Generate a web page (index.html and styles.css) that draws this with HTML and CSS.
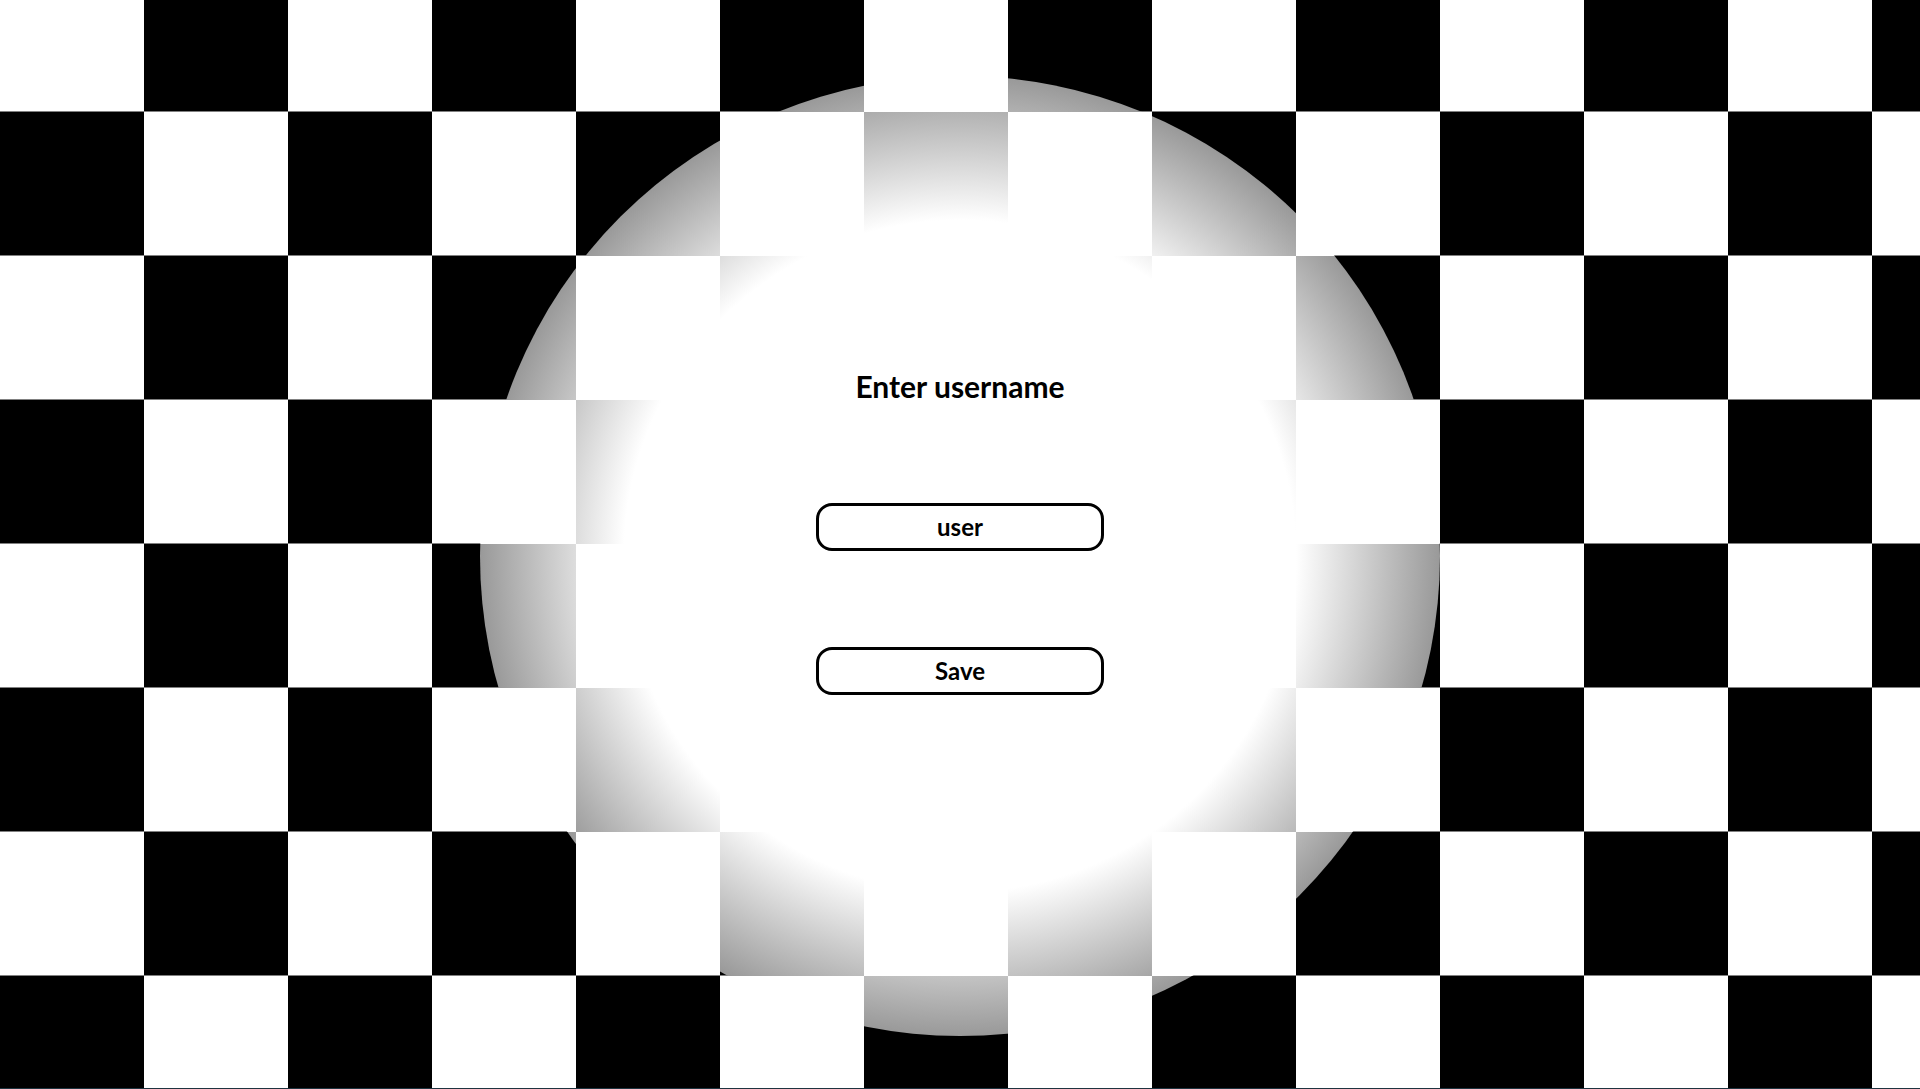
FILE: index.html
```html
<!DOCTYPE html>
<html lang="en">
<head>
<meta charset="utf-8">
<title>Enter username</title>
<link rel="stylesheet" href="styles.css">
</head>
<body>
<main class="page">
  <section class="orb">
    <h1 class="title">Enter username</h1>
    <input class="field" type="text" value="user" aria-label="Username">
    <button class="save" type="button">Save</button>
  </section>
</main>
</body>
</html>
```
FILE: styles.css
```css
html {
  background: #1f3440;
}
body {
  margin: 0;
}
.page {
  height: 1088px;
  display: flex;
  flex-direction: column;
  align-items: center;
  background:
    conic-gradient(transparent 25%, #fff 0 50%, transparent 0 75%, #fff 0) 0 -32.5px / 288px 288px fixed,
    #000;
  overflow: hidden;
}
.orb {
  margin-top: 75.5px;
  width: 960px;
  height: 960px;
  flex-shrink: 0;
  box-sizing: border-box;
  border-radius: 50%;
  padding-top: 292px;
  display: flex;
  flex-direction: column;
  align-items: center;
  background:
    conic-gradient(transparent 25%, #fff 0 50%, transparent 0 75%, #fff 0) 0 -32.5px / 288px 288px fixed,
    radial-gradient(circle closest-side, #fff 70%, #999 100%);
}
.title {
  margin: 0;
  font: 700 30px/36px Lato, "Open Sans", sans-serif;
  color: #000;
}
.field,
.save {
  display: block;
  width: 288px;
  height: 48px;
  box-sizing: border-box;
  border: 3px solid #000;
  border-radius: 16px;
  background: #fff;
  color: #000;
  font: 700 24px Lato, "Open Sans", sans-serif;
  text-align: center;
  padding: 0;
  outline: none;
}
.field {
  margin-top: 99px;
}
.save {
  margin-top: 96px;
  cursor: pointer;
}
```
